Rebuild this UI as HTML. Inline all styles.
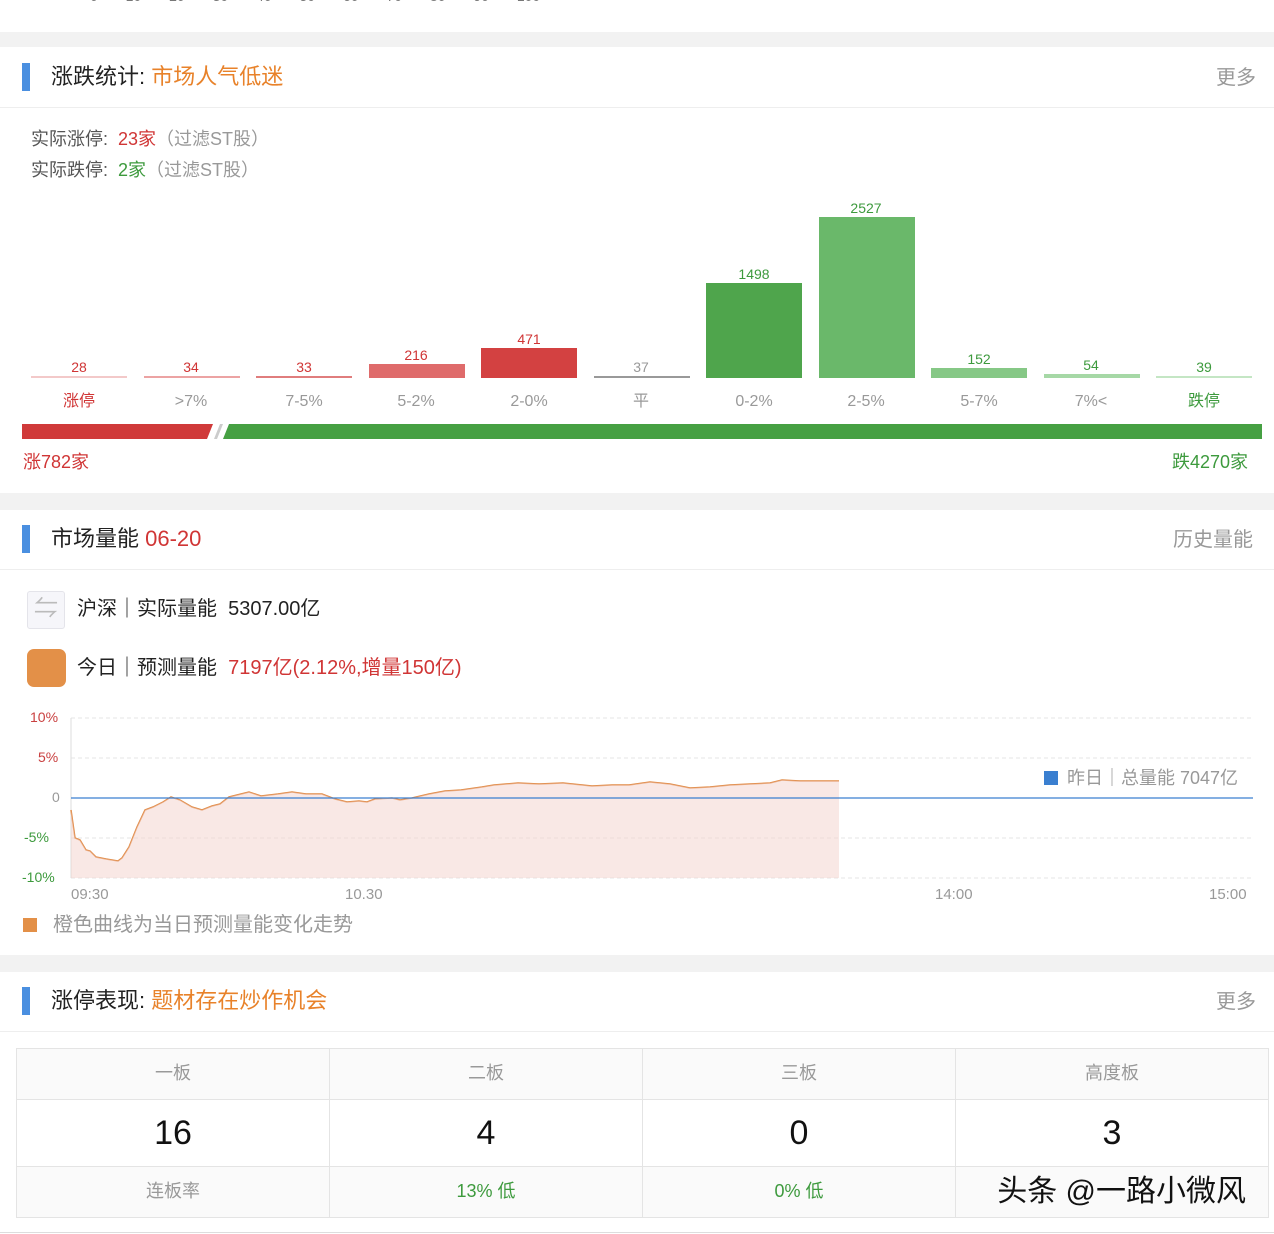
<!DOCTYPE html><html><head><meta charset="utf-8"><style>
*{margin:0;padding:0;box-sizing:border-box}
body{width:1274px;height:1234px;background:#fff;font-family:"Liberation Sans","Noto Sans CJK SC",sans-serif;position:relative;overflow:hidden;color:#222}
.a{position:absolute;white-space:nowrap;line-height:1.2}
.gray{background:#f2f2f2;position:absolute;left:0;width:1274px}
.bar{position:absolute;left:22px;width:8px;height:28px;background:#4a8fe0}
.h{font-size:22px;color:#222}
.more{font-size:20px;color:#999}
.line{position:absolute;left:0;width:1274px;height:1px;background:#eee}
.lbl{position:absolute;font-size:16px;text-align:center;width:112px;color:#999;line-height:20px;height:20px}
.num{position:absolute;font-size:14px;text-align:center;width:112px;line-height:16px}
.b{position:absolute;width:96px}
td{border:1px solid #e4e4e4;text-align:center;background:#fafafa}
</style></head><body>
<div class="a" style="left:90px;top:-12px;font-size:14px;color:#777;word-spacing:24px">0 10 20 30 40 50 60 70 80 90 100</div>
<div class="gray" style="top:32px;height:15px"></div>
<div class="bar" style="top:63px"></div>
<div class="a h" style="left:51px;top:64px">涨跌统计: <span style="color:#e8822a">市场人气低迷</span></div>
<div class="a more" style="left:1216px;top:66px">更多</div>
<div class="line" style="top:107px"></div>
<div class="a" style="left:31px;top:129px;font-size:18px;color:#555">实际涨停: &nbsp;<span style="color:#d03535">23家</span><span style="color:#999">（过滤ST股）</span></div>
<div class="a" style="left:31px;top:160px;font-size:18px;color:#555">实际跌停: &nbsp;<span style="color:#3d9a3d">2家</span><span style="color:#999">（过滤ST股）</span></div>

<div class="b" style="left:31px;top:376px;height:2px;background:#f3c9c9"></div>
<div class="b" style="left:144px;top:376px;height:2px;background:#eca3a3"></div>
<div class="b" style="left:256px;top:376px;height:2px;background:#e07d7d"></div>
<div class="b" style="left:369px;top:364px;height:14px;background:#df6b6b"></div>
<div class="b" style="left:481px;top:348px;height:30px;background:#d34141"></div>
<div class="b" style="left:594px;top:376px;height:2px;background:#999"></div>
<div class="b" style="left:706px;top:283px;height:95px;background:#4fa54c"></div>
<div class="b" style="left:819px;top:217px;height:161px;background:#6ab86a"></div>
<div class="b" style="left:931px;top:368px;height:10px;background:#86c886"></div>
<div class="b" style="left:1044px;top:374px;height:4px;background:#a6d8a6"></div>
<div class="b" style="left:1156px;top:376px;height:2px;background:#c4e6c4"></div>

<div class="num" style="left:23px;top:359px;color:#d03535">28</div>
<div class="num" style="left:135px;top:359px;color:#d03535">34</div>
<div class="num" style="left:248px;top:359px;color:#d03535">33</div>
<div class="num" style="left:360px;top:347px;color:#d03535">216</div>
<div class="num" style="left:473px;top:331px;color:#d03535">471</div>
<div class="num" style="left:585px;top:359px;color:#999">37</div>
<div class="num" style="left:698px;top:266px;color:#3d9a3d">1498</div>
<div class="num" style="left:810px;top:200px;color:#3d9a3d">2527</div>
<div class="num" style="left:923px;top:351px;color:#3d9a3d">152</div>
<div class="num" style="left:1035px;top:357px;color:#3d9a3d">54</div>
<div class="num" style="left:1148px;top:359px;color:#3d9a3d">39</div>

<div class="lbl" style="left:23px;top:392px;color:#d03535">涨停</div>
<div class="lbl" style="left:135px;top:392px">&gt;7%</div>
<div class="lbl" style="left:248px;top:392px">7-5%</div>
<div class="lbl" style="left:360px;top:392px">5-2%</div>
<div class="lbl" style="left:473px;top:392px">2-0%</div>
<div class="lbl" style="left:585px;top:392px">平</div>
<div class="lbl" style="left:698px;top:392px">0-2%</div>
<div class="lbl" style="left:810px;top:392px">2-5%</div>
<div class="lbl" style="left:923px;top:392px">5-7%</div>
<div class="lbl" style="left:1035px;top:392px">7%&lt;</div>
<div class="lbl" style="left:1148px;top:392px;color:#3d9a3d">跌停</div>
<svg class="a" style="left:22px;top:424px" width="1240" height="16"><polygon points="0,0 191,0 185,15 0,15" fill="#d03a3a"/><polygon points="198,0 201,0 195,15 192,15" fill="#ccc"/><polygon points="207,0 1240,0 1240,15 201,15" fill="#46a043"/></svg>
<div class="a" style="left:23px;top:452px;font-size:18px;color:#d03535">涨782家</div>
<div class="a" style="left:1172px;top:452px;font-size:18px;color:#3d9a3d">跌4270家</div>

<div class="gray" style="top:493px;height:17px"></div>
<div class="bar" style="top:525px"></div>
<div class="a h" style="left:51px;top:526px">市场量能 <span style="color:#d03535">06-20</span></div>
<div class="a more" style="left:1173px;top:528px">历史量能</div>
<div class="line" style="top:569px"></div>
<div class="a" style="left:27px;top:591px;width:38px;height:38px;border:1px solid #e4e4ea;background:#f6f6fa;border-radius:3px;color:#bbb;font-size:24px;text-align:center;line-height:34px">⇋</div>
<div class="a" style="left:77px;top:597px;font-size:20px">沪深｜实际量能 &nbsp;5307.00亿</div>
<div class="a" style="left:27px;top:649px;width:39px;height:38px;background:#e39048;border-radius:7px"></div>
<div class="a" style="left:77px;top:656px;font-size:20px">今日｜预测量能 &nbsp;<span style="color:#d03535">7197亿(2.12%,增量150亿)</span></div>
<div class="a" style="left:30px;top:709px;font-size:14px;color:#c94040">10%</div>
<div class="a" style="left:38px;top:749px;font-size:14px;color:#c94040">5%</div>
<div class="a" style="left:52px;top:789px;font-size:14px;color:#999">0</div>
<div class="a" style="left:24px;top:829px;font-size:14px;color:#3d9a3d">-5%</div>
<div class="a" style="left:22px;top:869px;font-size:14px;color:#3d9a3d">-10%</div>
<svg class="a" style="left:0;top:700px" width="1274" height="200">
<g stroke="#e6e6e6" stroke-dasharray="4,3"><line x1="71" y1="18" x2="1253" y2="18"/><line x1="71" y1="58" x2="1253" y2="58"/><line x1="71" y1="138" x2="1253" y2="138"/><line x1="71" y1="178" x2="1253" y2="178"/></g>
<line x1="71" y1="18" x2="71" y2="178" stroke="#ddd"/>
<path id="c" d="M71,110 L75,138 80,140 86,150 90,151 96,157 106,159 118,161 122,158 129,147 137,127 145,110 153,107 163,102 171,97 180,100 192,107 202,110 212,106 220,104 229,97 241,94 249,92 261,96 278,94 292,92 306,94 322,94 335,99 347,102 359,101 367,102 375,99 392,98 400,100 412,98 429,94 445,91 461,90 482,87 494,85 506,84 518,83 539,84 563,83 592,86 612,85 629,85 650,82 670,84 690,88 710,87 730,85 750,84 770,83 782,80 800,81 820,81 839,81" fill="none" stroke="#e08a45" stroke-width="1.5"/>
<path d="M71,110 L75,138 80,140 86,150 90,151 96,157 106,159 118,161 122,158 129,147 137,127 145,110 153,107 163,102 171,97 180,100 192,107 202,110 212,106 220,104 229,97 241,94 249,92 261,96 278,94 292,92 306,94 322,94 335,99 347,102 359,101 367,102 375,99 392,98 400,100 412,98 429,94 445,91 461,90 482,87 494,85 506,84 518,83 539,84 563,83 592,86 612,85 629,85 650,82 670,84 690,88 710,87 730,85 750,84 770,83 782,80 800,81 820,81 839,81 L839,178 71,178Z" fill="#f3d2cc" fill-opacity="0.5"/>
<line x1="71" y1="98" x2="1253" y2="98" stroke="#3a7fd0" stroke-width="1.2"/>
<rect x="1044" y="71" width="14" height="14" fill="#3a7fd0"/>
</svg>
<div class="a" style="left:1067px;top:768px;font-size:18px;color:#999">昨日｜总量能 7047亿</div>
<div class="a" style="left:71px;top:886px;font-size:15px;color:#999">09:30</div>
<div class="a" style="left:345px;top:886px;font-size:15px;color:#999">10.30</div>
<div class="a" style="left:935px;top:886px;font-size:15px;color:#999">14:00</div>
<div class="a" style="left:1209px;top:886px;font-size:15px;color:#999">15:00</div>
<div class="a" style="left:23px;top:918px;width:14px;height:14px;background:#e39048"></div>
<div class="a" style="left:53px;top:913px;font-size:20px;color:#999">橙色曲线为当日预测量能变化走势</div>

<div class="gray" style="top:955px;height:17px"></div>
<div class="bar" style="top:987px"></div>
<div class="a h" style="left:51px;top:988px">涨停表现: <span style="color:#e8822a">题材存在炒作机会</span></div>
<div class="a more" style="left:1216px;top:990px">更多</div>
<div class="line" style="top:1031px"></div>
<table class="a" style="left:16px;top:1048px;width:1253px;border-collapse:collapse;table-layout:fixed">
<tr style="height:51px;font-size:18px;color:#999"><td>一板</td><td>二板</td><td>三板</td><td>高度板</td></tr>
<tr style="height:67px;font-size:34px;color:#111"><td style="background:#fff">16</td><td style="background:#fff">4</td><td style="background:#fff">0</td><td style="background:#fff">3</td></tr>
<tr style="height:51px;font-size:18px;color:#999"><td>连板率</td><td style="color:#3d9a3d">13% 低</td><td style="color:#3d9a3d">0% 低</td><td style="text-align:right;padding-right:22px"><span style="font-size:30px;color:#111">头条 @一路小微风</span></td></tr>
</table>
<div class="line" style="top:1232px;background:#ddd"></div>
</body></html>
